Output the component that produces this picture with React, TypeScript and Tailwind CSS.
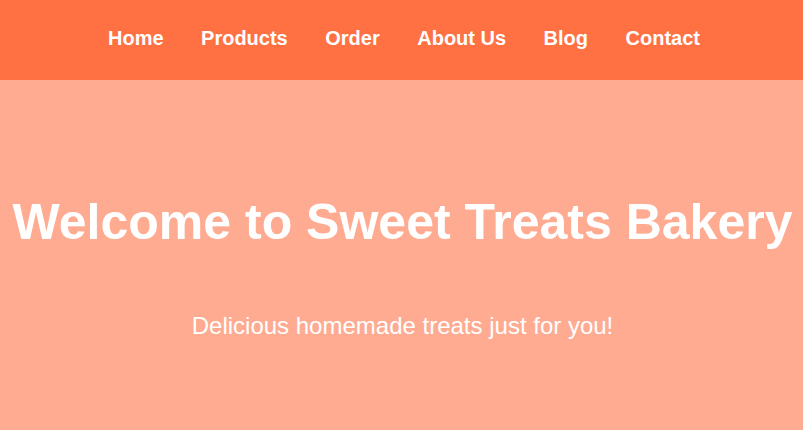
export default function App() {
  const links = ["Home", "Products", "Order", "About Us", "Blog", "Contact"];

  return (
    <div className="min-h-screen bg-[#ffab91] font-['Liberation_Sans',Arial,sans-serif] text-white">
      <header className="flex h-20 items-center justify-center bg-[#ff7043] pb-[4px]">
        <nav className="flex gap-[37.5px] pl-[5px]">
          {links.map((link) => (
            <a key={link} href="#" className="text-[20px] font-bold text-white">
              {link}
            </a>
          ))}
        </nav>
      </header>

      <section className="flex flex-col items-center pt-[114px] pl-[2px] text-center">
        <h1 className="text-[50px] font-bold leading-[1.15]">
          Welcome to Sweet Treats Bakery
        </h1>
        <p className="mt-[60px] text-[24px] leading-[1.15]">
          Delicious homemade treats just for you!
        </p>
      </section>
    </div>
  );
}
